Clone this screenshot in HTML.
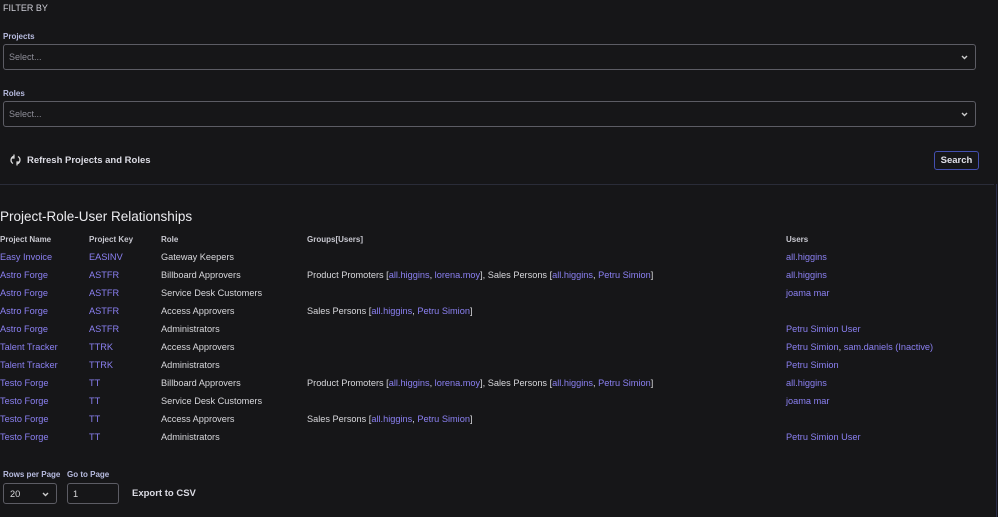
<!DOCTYPE html>
<html><head><style>
body{margin:0;background:#161618;color:#d8d8dc;font-family:"Liberation Sans",sans-serif;width:998px;height:517px;overflow:hidden;position:relative;font-size:9.2px}
.a{position:absolute;white-space:nowrap}
.lbl{font-weight:bold;font-size:8px;color:#b8bce0}
.sel{position:absolute;left:3px;width:973px;height:26px;border:1px solid #5c5c64;border-radius:3px;box-sizing:border-box}
.sel span{position:absolute;left:5px;top:7px;color:#8e8e98;font-size:9px}
.sel svg{position:absolute;right:7px;top:10px}
.l{color:#8b80f2}
b.l{font-weight:normal}
.row{position:absolute;left:0;height:18px;font-size:9.2px;white-space:nowrap}
.row span{position:absolute;top:0}
.h{font-weight:bold;font-size:8px;color:#c8c8d0}
</style></head><body>
<div class="a" style="left:3px;top:3px;font-size:9px;color:#d0d0d8">FILTER BY</div>
<div class="a lbl" style="left:3px;top:32px">Projects</div>
<div class="sel" style="top:44px"><span>Select...</span><svg width="7" height="5" viewBox="0 0 7 5"><path d="M1 1l2.5 2.5L6 1" stroke="#ccc" stroke-width="1.4" fill="none"/></svg></div>
<div class="a lbl" style="left:3px;top:89px">Roles</div>
<div class="sel" style="top:101px"><span>Select...</span><svg width="7" height="5" viewBox="0 0 7 5"><path d="M1 1l2.5 2.5L6 1" stroke="#ccc" stroke-width="1.4" fill="none"/></svg></div>
<svg class="a" style="left:10px;top:154px" width="11" height="12" viewBox="0 0 11 12"><path d="M4 2.2A4 4 0 0 0 3 9.5M7 9.8A4 4 0 0 0 8 2.5" stroke="#ddd" stroke-width="1.3" fill="none"/><path d="M4 0.5v3.5h-2.5M7 11.5V8h2.5" stroke="#ddd" stroke-width="1.2" fill="none"/></svg>
<div class="a" style="left:27px;top:155px;font-size:9.5px;font-weight:bold;color:#dcdce4">Refresh Projects and Roles</div>
<div class="a" style="left:934px;top:151px;width:45px;height:19px;border:1px solid #4450b0;border-radius:3px;box-sizing:border-box;text-align:center;line-height:17px;font-size:9.5px;color:#e0e0e8;font-weight:bold">Search</div>
<div class="a" style="left:0;top:184px;width:994px;height:1px;background:#2a2c38"></div>
<div class="a" style="left:996px;top:184px;width:1px;height:333px;background:#2a2c48"></div>
<div class="a" style="left:0;top:209px;font-size:13.5px;color:#ececf0">Project-Role-User Relationships</div>
<div class="row h" style="top:235px"><span style="left:0">Project Name</span><span style="left:89px">Project Key</span><span style="left:161px">Role</span><span style="left:307px">Groups[Users]</span><span style="left:786px">Users</span></div>
<div class="row" style="top:252px"><span class="l" style="left:0">Easy Invoice</span><span class="l" style="left:89px">EASINV</span><span style="left:161px">Gateway Keepers</span><span class="l" style="left:786px">all.higgins</span></div>
<div class="row" style="top:270px"><span class="l" style="left:0">Astro Forge</span><span class="l" style="left:89px">ASTFR</span><span style="left:161px">Billboard Approvers</span><span style="left:307px">Product Promoters [<b class="l">all.higgins</b>, <b class="l">lorena.moy</b>], Sales Persons [<b class="l">all.higgins</b>, <b class="l">Petru Simion</b>]</span><span class="l" style="left:786px">all.higgins</span></div>
<div class="row" style="top:288px"><span class="l" style="left:0">Astro Forge</span><span class="l" style="left:89px">ASTFR</span><span style="left:161px">Service Desk Customers</span><span class="l" style="left:786px">joama mar</span></div>
<div class="row" style="top:306px"><span class="l" style="left:0">Astro Forge</span><span class="l" style="left:89px">ASTFR</span><span style="left:161px">Access Approvers</span><span style="left:307px">Sales Persons [<b class="l">all.higgins</b>, <b class="l">Petru Simion</b>]</span></div>
<div class="row" style="top:324px"><span class="l" style="left:0">Astro Forge</span><span class="l" style="left:89px">ASTFR</span><span style="left:161px">Administrators</span><span class="l" style="left:786px">Petru Simion User</span></div>
<div class="row" style="top:342px"><span class="l" style="left:0">Talent Tracker</span><span class="l" style="left:89px">TTRK</span><span style="left:161px">Access Approvers</span><span style="left:786px"><b class="l">Petru Simion</b>, <b class="l">sam.daniels (Inactive)</b></span></div>
<div class="row" style="top:360px"><span class="l" style="left:0">Talent Tracker</span><span class="l" style="left:89px">TTRK</span><span style="left:161px">Administrators</span><span class="l" style="left:786px">Petru Simion</span></div>
<div class="row" style="top:378px"><span class="l" style="left:0">Testo Forge</span><span class="l" style="left:89px">TT</span><span style="left:161px">Billboard Approvers</span><span style="left:307px">Product Promoters [<b class="l">all.higgins</b>, <b class="l">lorena.moy</b>], Sales Persons [<b class="l">all.higgins</b>, <b class="l">Petru Simion</b>]</span><span class="l" style="left:786px">all.higgins</span></div>
<div class="row" style="top:396px"><span class="l" style="left:0">Testo Forge</span><span class="l" style="left:89px">TT</span><span style="left:161px">Service Desk Customers</span><span class="l" style="left:786px">joama mar</span></div>
<div class="row" style="top:414px"><span class="l" style="left:0">Testo Forge</span><span class="l" style="left:89px">TT</span><span style="left:161px">Access Approvers</span><span style="left:307px">Sales Persons [<b class="l">all.higgins</b>, <b class="l">Petru Simion</b>]</span></div>
<div class="row" style="top:432px"><span class="l" style="left:0">Testo Forge</span><span class="l" style="left:89px">TT</span><span style="left:161px">Administrators</span><span class="l" style="left:786px">Petru Simion User</span></div>
<div class="a lbl" style="left:3px;top:470px">Rows per Page</div>
<div class="a lbl" style="left:67px;top:470px">Go to Page</div>
<div class="a" style="left:3px;top:483px;width:54px;height:21px;border:1px solid #5c5c64;border-radius:3px;box-sizing:border-box"><span style="position:absolute;left:6px;top:5px">20</span><svg style="position:absolute;left:38px;top:8px" width="7" height="5" viewBox="0 0 7 5"><path d="M1 1l2.5 2.5L6 1" stroke="#ccc" stroke-width="1.4" fill="none"/></svg></div>
<div class="a" style="left:67px;top:483px;width:52px;height:21px;border:1px solid #5c5c64;border-radius:3px;box-sizing:border-box"><span style="position:absolute;left:5px;top:5px">1</span></div>
<div class="a" style="left:132px;top:488px;font-weight:bold;font-size:9.5px;color:#dcdce4">Export to CSV</div>
</body></html>
